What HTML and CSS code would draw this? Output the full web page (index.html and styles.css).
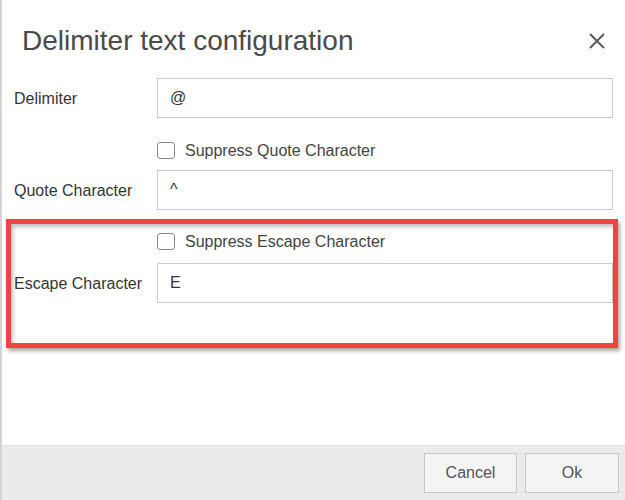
FILE: index.html
```html
<!DOCTYPE html>
<html>
<head>
<meta charset="utf-8">
<link rel="stylesheet" href="styles.css">
</head>
<body>
<div class="modal">
  <div class="header">
    <h1 class="title">Delimiter text configuration</h1>
    <button class="close" aria-label="Close">
      <svg width="16" height="16" viewBox="0 0 16 16"><path d="M1 1 L15 15 M15 1 L1 15" stroke="#555" stroke-width="1.8" fill="none"/></svg>
    </button>
  </div>
  <div class="form">
    <div class="row">
      <label class="label">Delimiter</label>
      <div class="input">@</div>
    </div>
    <div class="check-row">
      <span class="box"></span>
      <span class="check-label">Suppress Quote Character</span>
    </div>
    <div class="row">
      <label class="label">Quote Character</label>
      <div class="input">^</div>
    </div>
    <div class="check-row check-row-escape">
      <span class="box"></span>
      <span class="check-label">Suppress Escape Character</span>
    </div>
    <div class="row">
      <label class="label">Escape Character</label>
      <div class="input">E</div>
    </div>
  </div>
  <div class="footer">
    <button class="btn btn-cancel">Cancel</button>
    <button class="btn btn-ok">Ok</button>
  </div>
  <div class="highlight"></div>
</div>
</body>
</html>
```
FILE: styles.css
```css
* { box-sizing: border-box; }
html, body { margin: 0; padding: 0; }
body {
  width: 625px;
  height: 500px;
  overflow: hidden;
  background: #fff;
  font-family: "Liberation Sans", Arial, sans-serif;
}
.modal {
  position: relative;
  height: 500px;
  display: flex;
  flex-direction: column;
  border-left: 2px solid #d4d4d4;
  background: #fff;
}
.header {
  display: flex;
  align-items: center;
  justify-content: space-between;
  height: 64px;
  padding: 17px 20px 0 20px;
}
.title {
  margin: 0;
  font-size: 28px;
  line-height: 32px;
  font-weight: normal;
  color: #4a4a4a;
}
.close {
  border: 0;
  background: none;
  padding: 0;
  width: 16px;
  height: 16px;
  display: flex;
}
.form {
  flex: 1;
  padding: 14px 12px 0 12px;
}
.row {
  display: flex;
  align-items: center;
  height: 40px;
}
.label {
  width: 143px;
  font-size: 16px;
  color: #333;
  padding-top: 1px;
}
.input {
  flex: 1;
  height: 40px;
  border: 1px solid #cccccc;
  padding: 0 12px;
  display: flex;
  align-items: center;
  font-size: 16px;
  color: #333;
}
.check-row {
  display: flex;
  align-items: center;
  height: 17px;
  margin: 24px 0 11px 143px;
}
.check-row-escape {
  margin-top: 23px;
  margin-bottom: 13px;
}
.box {
  width: 18px;
  height: 17px;
  border: 1.5px solid #8a8a8a;
  border-radius: 3px;
  background: #fff;
}
.check-label {
  margin-left: 10px;
  font-size: 16px;
  color: #444;
}
.footer {
  height: 55px;
  background: #ebebeb;
  border-top: 1px solid #e0e0e0;
  display: flex;
  justify-content: flex-end;
  align-items: flex-start;
  gap: 8px;
  padding: 7px 6px 0 0;
}
.btn {
  height: 40px;
  background: #f4f4f4;
  border: 1px solid #c8c8c8;
  font-family: "Liberation Sans", Arial, sans-serif;
  font-size: 16px;
  color: #555;
}
.btn-cancel { width: 93px; }
.btn-ok { width: 94px; }
.highlight {
  position: absolute;
  left: 4px;
  top: 219px;
  width: 612px;
  height: 129px;
  border: 5px solid #ef4242;
  box-shadow: 2px 3px 4px rgba(0,0,0,0.35), inset 2px 3px 4px rgba(0,0,0,0.25);
  pointer-events: none;
}
```
